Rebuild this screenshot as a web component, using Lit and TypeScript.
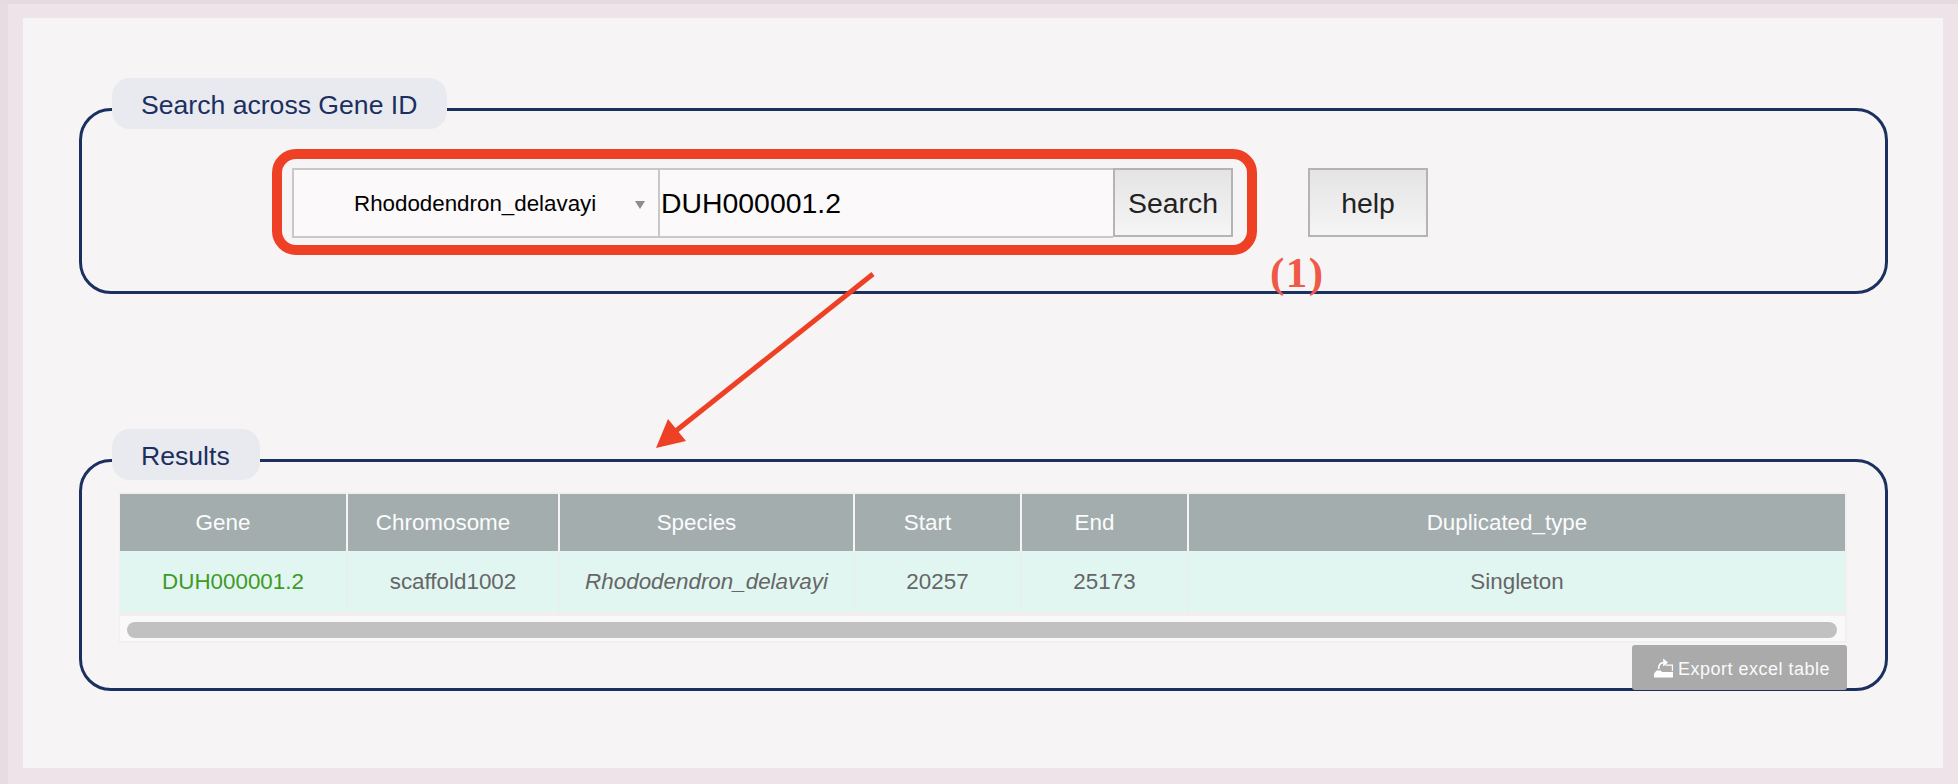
import { LitElement, html, css, svg } from "lit";
import { customElement } from "lit/decorators.js";

const columns = [
  { title: "Gene", width: 227 },
  { title: "Chromosome", width: 212 },
  { title: "Species", width: 295 },
  { title: "Start", width: 167 },
  { title: "End", width: 167 },
  { title: "Duplicated_type", width: 657 },
];

@customElement("app-root")
export class AppRoot extends LitElement {
  static styles = css`
    :host {
      display: block;
      width: 1958px;
      height: 784px;
      box-sizing: border-box;
      position: relative;
      overflow: hidden;
      background: #ede3e8;
      border-top: 4px solid #e4dadf;
      border-left: 8px solid #e6dce2;
      font-family: "Liberation Sans", Arial, sans-serif;
    }
    .panel {
      box-sizing: border-box;
      margin: 14px 15px 0 15px;
      width: 1920px;
      height: 750px;
      background: #f6f4f5;
      padding: 90px 0 0 56px;
    }
    .field {
      box-sizing: border-box;
      width: 1809px;
      border: 3px solid #1b305f;
      border-radius: 32px;
      position: relative;
    }
    .search-field { height: 186px; margin-bottom: 165px; }
    .result-field { height: 232px; }
    .legend {
      box-sizing: border-box;
      height: 51px;
      width: fit-content;
      margin: -33px 0 0 30px;
      padding: 2px 30px 0 29px;
      background: #e9eaef;
      border-radius: 18px;
      color: #1b305f;
      font-size: 26.6px;
      line-height: 51px;
    }
    .controls { display: flex; align-items: flex-start; margin: 20px 0 0 190px; gap: 51px; }
    .redbox {
      box-sizing: border-box;
      width: 985px;
      height: 106px;
      border: 10px solid #ee4025;
      border-radius: 24px;
      padding: 9px 13px 0 10px;
      display: flex;
      align-items: flex-start;
    }
    .select-wrap { position: relative; width: 368px; height: 70px; }
    .select-wrap::after {
      content: "";
      position: absolute;
      right: 15px;
      top: 33px;
      border-left: 5px solid transparent;
      border-right: 5px solid transparent;
      border-top: 8px solid #8d8d8d;
    }
    select {
      appearance: none;
      -webkit-appearance: none;
      box-sizing: border-box;
      width: 100%;
      height: 100%;
      border: 2px solid #c8c8c8;
      border-radius: 0;
      background: #fbf9fa;
      color: #000;
      font: 22.35px "Liberation Sans", Arial, sans-serif;
      padding: 0 0 0 60px;
      margin: 0;
      outline: none;
    }
    input {
      box-sizing: border-box;
      width: 453px;
      height: 70px;
      border: 2px solid #c8c8c8;
      border-width: 2px 0 2px 0;
      background: #fbf9fa;
      color: #000;
      font: 28.4px "Liberation Sans", Arial, sans-serif;
      padding: 0 0 0 1px;
      margin: 0;
      outline: none;
    }
    button {
      box-sizing: border-box;
      width: 120px;
      height: 69px;
      margin: 0;
      padding: 2px 0 0 0;
      border: 2px solid #b4b4b4;
      border-radius: 0;
      background: linear-gradient(#e4e4e4, #f5f5f5);
      color: #222;
      font: 28.4px "Liberation Sans", Arial, sans-serif;
    }
    .help { margin-top: 19px; }
    .note {
      position: absolute;
      left: 1188px;
      top: 137px;
      color: #ee5a47;
      font: bold 43px/50px "Liberation Serif", "Times New Roman", serif;
      letter-spacing: 1.5px;
    }
    .table-wrap {
      box-sizing: border-box;
      width: 1728px;
      margin: 12px 0 0 37px;
      border: 2px solid #f1eff0;
      border-left-width: 1px;
    }
    table { border-collapse: collapse; table-layout: fixed; width: 1725px; font-size: 22.4px; }
    th {
      height: 57px;
      padding: 0 20px 0 0;
      background: #a3adae;
      color: #fbfcfc;
      font-weight: normal;
      text-align: center;
      border-left: 2px solid #f6f4f5;
    }
    td {
      height: 61px;
      padding: 0;
      background: #e1f6f1;
      color: #666666;
      text-align: center;
      border-left: 2px solid #e8f0ed;
    }
    th:first-child, td:first-child { border-left: none; }
    .gene { color: #3f9a26; }
    .species { font-style: italic; }
    .track {
      box-sizing: border-box;
      height: 29px;
      border-top: 4px solid #f0eeef;
      background: #f9f9f9;
      padding: 6px 8px 0 7px;
    }
    .thumb { height: 16px; border-radius: 8px; background: #c1c1c1; }
    .export {
      position: absolute;
      right: 38px;
      bottom: -2px;
      box-sizing: border-box;
      width: 215px;
      height: 45px;
      border-radius: 3px;
      background: #aaaaaa;
      color: #fafafa;
      font-size: 18px;
      letter-spacing: 0.5px;
      display: flex;
      align-items: center;
      padding-left: 22px;
      gap: 4px;
    }
    .export span { padding-top: 3px; }
    .export svg { width: 20px; height: 20px; flex: none; }
    .arrow { position: absolute; left: -8px; top: -4px; pointer-events: none; }
  `;

  private exportIcon() {
    return html`<svg viewBox="0 0 20 20" aria-hidden="true">
      <path d="M0.5 19.5 H18.4 a.6 .6 0 0 0 .6 -.6 V14 H8 L6.8 12.6 H2.6 L0 15.5 V19 a.5 .5 0 0 0 .5 .5Z" fill="#fff"/>
      <path d="M11.5 7.2 H18.4 V13" fill="none" stroke="#fff" stroke-width="1.2"/>
      <path d="M4.6 11 C4.6 7 6.4 4.6 9.6 4.6" fill="none" stroke="#fff" stroke-width="1.7"/>
      <path d="M9.2 0.6 L14 4.6 L9.2 8.4Z" fill="#fff"/>
    </svg>`;
  }

  render() {
    return html`
      <div class="panel">
        <section class="field search-field">
          <div class="legend">Search across Gene ID</div>
          <div class="controls">
            <div class="redbox">
              <div class="select-wrap">
                <select><option>Rhododendron_delavayi</option></select>
              </div>
              <input type="text" .value=${"DUH000001.2"} />
              <button>Search</button>
            </div>
            <button class="help">help</button>
          </div>
          <div class="note">(1)</div>
        </section>
        <section class="field result-field">
          <div class="legend">Results</div>
          <div class="table-wrap">
            <table>
              <colgroup>
                ${columns.map((c) => html`<col style="width:${c.width}px" />`)}
              </colgroup>
              <thead>
                <tr>${columns.map((c) => html`<th>${c.title}</th>`)}</tr>
              </thead>
              <tbody>
                <tr>
                  <td class="gene">DUH000001.2</td>
                  <td>scaffold1002</td>
                  <td class="species">Rhododendron_delavayi</td>
                  <td>20257</td>
                  <td>25173</td>
                  <td>Singleton</td>
                </tr>
              </tbody>
            </table>
            <div class="track"><div class="thumb"></div></div>
          </div>
          <div class="export">${this.exportIcon()}<span>Export excel table</span></div>
        </section>
      </div>
      <svg class="arrow" width="1958" height="784" viewBox="0 0 1958 784" aria-hidden="true">
        ${svg`<line x1="873" y1="274" x2="672" y2="434" stroke="#ee4025" stroke-width="5"/>
        <polygon points="656,448 668,419 686,441" fill="#ee4025"/>`}
      </svg>
    `;
  }
}
